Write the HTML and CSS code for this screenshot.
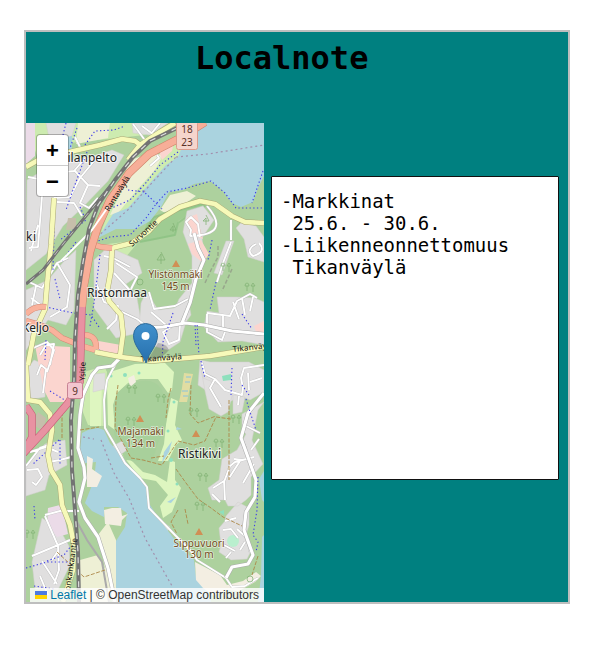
FILE: index.html
```html
<!DOCTYPE html>
<html lang="fi">
<head>
<meta charset="utf-8">
<title>Localnote</title>
<link rel="stylesheet" href="styles.css">
</head>
<body>
<main class="app">
  <h1 class="title">Localnote</h1>
  <div class="content">
    <section class="map">
      <svg class="tiles" viewBox="26 123 238 479" preserveAspectRatio="none">
        <rect x="26" y="123" width="238" height="479" fill="#add19e"/>
        <!-- light grass, scrub and fields -->
        <path class="grass" d="M26 123H160L145 135 70 143 40 165ZM120 180L150 160 190 135 180 160 130 220 100 235ZM100 245L140 240 115 270ZM84 372L104 366 107 372 104 426 88 425 82 410Z"/>
        <path class="field" d="M78 123H110L108 138 76 144ZM128 161L150 153 163 155 155 170 137 190 118 213 110 215 122 190ZM160 210L170 195 187 191 196 196 186 203 165 213ZM98 535L108 522 116 540 116 602H112L100 545ZM80 560L98 555 108 575 110 602H80Z"/>
        <path class="golf" d="M110 372L135 364 165 363 174 372 172 390 168 393 163 386 158 379 140 379 128 383 117 393 113 405 115 430 108 425 107 385ZM171 398L178 401 175 425 182 440 176 445 168 461 158 461 164 444 166 424ZM121 453L133 462 143 472 155 475 167 482 170 460 175 462 175 480 181 488 172 512 163 518 160 506 168 495 156 481 140 478ZM90 375H102L101 426H90Z"/>
        <path class="wood" d="M117 395Q125 382 142 381 155 379 162 390L167 407 166 425 158 443 152 462 125 460 114 434Z"/>
        <path d="M148 220Q165 209 180 210L205 203 201 216 189 214 178 221 175 236 154 240 140 242Z" fill="#9fcc92"/>
        <path d="M140 242L175 235 178 223 189 215 201 216 205 205 M140 239L154 217 180 210 203 204" fill="none" stroke="#83bd7c" stroke-width="2" opacity=".55"/>
        <!-- built-up areas -->
        <g class="urban">
          <path d="M27 180L55 163 88 158 112 150 124 155 108 181 83 207 63 226 46 254 26 270Z"/>
          <path d="M46 123H76L72 136 50 143ZM132 123H168L150 135 133 133Z"/>
          <path d="M26 290L48 280 65 260 76 250 74 310 66 325 48 320 26 350Z"/>
          <path d="M94 260L108 247 120 252 138 260 142 273 126 284 137 298 143 332 116 338 94 308Z"/>
          <path d="M141 303L146 292 152 300 158 310 174 308 188 298 191 315 186 322 180 342 168 350 150 345 139 328Z"/>
          <path d="M187 211L203 206 214 220 202 238 204 253 198 269 193 297 177 304 179 299 192 283 192 256 183 232Z"/>
          <path d="M226 241H234L222 275 214 273ZM244 239L236 228 242 222 256 226 264 237V262L248 257ZM204 327L207 311 219 313 217 297 237 297 255 298 264 302V345L242 341 218 342Z"/>
          <path d="M200 360L210 362H249L264 370V392L250 400 240 396 226 404 210 393 198 385Z"/>
          <path d="M200 363L203 378 213 382 233 392 228 412 221 416 209 409 205 391ZM233 395L245 397 242 412 233 414Z"/>
          <path d="M264 402L258 410 252 440 263 464 251 477 251 495 246 500 238 506 228 506 225 500 212 500 208 488 219 480 222 459 237 450 246 434 242 430 242 414ZM226 516L238 502 249 508 249 525 245 538 252 549 247 559 231 560 219 552 221 545 219 528 225 521Z"/>
          <path d="M26 465L45 444 65 440 67 465 49 475 45 490 26 496ZM42 518L60 530 69 546 70 565 58 590 35 589 32 562ZM26 370L34 360 46 365 45 397 27 400Z"/>
          <path d="M94 374L105 373V389L93 392ZM160 520L170 527 166 533 157 526ZM113 446L122 441 127 450 120 455Z"/>
        </g>
        <g fill="#fbd5cf">
          <path d="M35 345L70 347 70 402 50 402 44 390 40 372ZM93 340L121 345V354H96ZM157 145L174 142 172 151 162 160ZM187 218L197 214 200 228 203 239 190 234ZM188 244L201 240 209 254 203 263 192 254ZM254 326L264 321V335L256 332Z"/>
        </g>
        <path d="M48 508L60 505 64 515 68 534 57 537 47 523ZM26 123H35V156L26 164Z" fill="#ebdbe8"/>
        <path d="M46 418L38 412 32 424 43 431ZM68 218H76V229L66 230Z" fill="#c6beab"/>
        <!-- lakes -->
        <g class="water">
          <path d="M207 123H264V176L258 188 253 202 241 207 232 203 222 190 210 181 194 184 183 190 169 192 161 207 150 221 136 229 116 229 98 238 113 214 128 208 149 184 166 165 178 157 182 147 193 136Z"/>
          <path d="M67 137L72 136V152L68 149Z"/>
          <path d="M82 433L88 430 98 428 104 430 110 443 122 456 130 468 146 486 148 502 162 523 178 544 194 560 196 577 210 592 211 602H116V541L125 527 127 513 118 507 104 507 104 517 92 511 85 503 94 480 96 462 85 463 80 450Z"/>
          <path d="M264 471L259 479 262 500 264 502ZM262 537L264 535V602H258L261 576ZM164 452L172 441 169 452 162 463ZM167 502L176 497 171 503ZM177 427L182 429 176 430Z"/>
        </g>
        <path d="M104 510L112 508 121 508 122 516 128 514 122 520 121 526 105 524ZM87 456L93 459 92 469 102 476 97 487 87 487ZM195 562L220 575 227 585 243 581 256 572 261 576 255 582 239 591 226 590 214 596 203 588 196 580ZM128 378L134 375 136 382 130 387Z" fill="#f3eee2"/>
        <path d="M184 373L193 374 190 387 187 402H179L182 388Z" fill="#e1dda2"/>
        <path d="M186 377H191M185 382H190M182 391H188M183 396H188" stroke="#88c3df"/>
        <g class="aqua"><circle cx="111" cy="376" r="1.500"/><circle cx="125" cy="375" r="2"/><circle cx="139" cy="373" r="1.500"/><circle cx="174" cy="402" r="1.500"/><circle cx="168" cy="431" r="1.500"/><circle cx="171" cy="460" r="2"/><circle cx="177" cy="484" r="1.500"/><path d="M222 376L231 374V380L223 381ZM219 512L224 510 224 515Z"/></g>
        <circle cx="233" cy="541" r="6" fill="#b9efce"/>
        <!-- minor streets -->
        <g class="street-case">
          <path id="streets" d="M28 177L44 180 55 173 74 171 87 156M54 198L70 197 80 178 94 161M75 171L88 185 100 186M88 185L80 203 89 208 98 198M42 196L38 247 29 248M38 225L31 251M57 202L74 203 82 216M75 137L82 151M133 124L147 143M142 126L157 137M160 123L151 134M150 166L159 158 157 155
          M29 282L42 288 57 263 68 258M57 263L70 285 67 307 50 317M36 286L32 305M31 298L42 306M40 355L46 345 54 344 50 365M37 375L41 365 46 369 43 393M104 256L113 258 130 267M116 263L137 277 131 289M114 273L135 296M96 283L104 302 118 306 116 320 107 329M120 311L137 319 146 326
          M149 292L154 309 175 306 188 299M151 312L166 325M180 324L179 340 169 344 163 332 171 327M207 206Q232 235 190 236M190 236L191 230 186 222 191 217 198 224 200 237
          M231 242L223 263 217 282M231 220V240M256 244Q245 250 253 256Q267 252 259 243M207 313L230 316 237 301 250 294 257 298M223 316V327M233 302L239 319M207 314L207 332 222 340 225 332M242 298L245 315M253 297L250 311
          M202 363L205 374 215 379 210 388 221 407M215 379L225 390 242 395 243 388 241 378 244 368 264 365M238 405L239 396M248 373L249 390M250 382L262 378M244 425L260 433M251 450L259 439M246 449L243 442M254 457L235 462 230 466 224 482M242 460L234 459M213 488L224 481 225 500M212 494L220 502M240 461L229 478M254 464L243 483
          M31 349L47 342 54 350 47 372M30 452L46 447 58 452M49 462L60 460 71 457M32 482L36 485 42 477 38 469 27 470M45 515L60 511 79 511M45 516L58 546 59 570 54 584M32 556L70 540M42 561L57 584M52 560L58 551M48 595L40 576M26 466L40 448 49 445
          M223 530L231 529 238 538M237 529L248 539 250 552M224 545L235 551M231 552L226 558M225 521L236 518M245 542L240 550"/>
          <path d="M116 363L107 380 104 400 105 428 115 445 125 463 140 478 147 487 149 508 175 535 190 550 197 560 210 568 226 578 232 587 245 586 258 578"/>
        </g>
        <use href="#streets" class="street"/>
        <path class="street" d="M116 363L107 380 104 400 105 428 115 445 125 463 140 478 147 487 149 508 175 535 190 550 197 560 210 568 226 578 232 587 245 586 258 578"/>
        <g class="major-case"><path id="majors" d="M119 359L112 366 98 368 92 375 83 395 80 415 78 448 84 467 85 478 79 502 85 518 98 537 108 568 115 602M144 328L163 327 185 323 204 325 232 331 264 334M264 393L248 413 241 438 249 460 256 480 255 497 246 512 244 530 253 555 248 564 232 567 226 578M194 233L198 248 204 260 196 279 190 303 182 323"/></g>
        <use href="#majors" class="major"/>
        <path d="M76 520L87 540 102 562 109 602" fill="none" stroke="#aaa" stroke-width="2"/>
        <!-- footpaths -->
        <path class="foot" d="M77 128L69 151 64 178 55 198 53 270M85 145L95 131 114 130 125 126M87 152L73 190 66 210M80 207L86 220 60 240M95 242L110 237 130 235 146 218 156 204 167 192 187 188 211 181 225 193 236 208 248 208 264 208M263 171L252 203M140 188L162 209M178 152L160 165 145 184 130 200 112 208M128 190L145 192M100 255L94 303 90 326M42 306L73 313 91 315 99 327M66 123L62 139M55 279L60 299M62 261L76 242M199 356L197 323M196 345L195 323M216 282L210 310M173 313L163 342 162 362M242 314L252 329M201 361L205 379M232 368L231 395M246 399L250 412 256 430M242 385L249 395M258 477L257 510 253 535 258 542 256 552M50 391L68 402M45 360L46 340M60 440V466M34 506L35 520M26 568L47 562 70 562M47 561L64 555 71 546M34 586L54 589M212 240L208 260M99 350L118 357M59 440L32 465"/>
        <path class="track" d="M118 385L116 400 115 428 131 458 143 460 162 465 178 441 194 445 205 441 216 417 231 419M191 385L190 414 198 423 216 416M229 400V480M151 458L164 456M176 469L186 483 198 499 211 508 223 517 242 526M178 510L171 522 177 534M185 509L188 524M62 438V415M80 430L99 427M57 552L84 577 105 570M258 556L252 575M171 388L168 400 166 418"/>
        <path d="M176 157L208 154 264 145M101 440L114 473 129 498 145 538 172 586M83 437L94 439M97 237L130 208 149 186 176 157" fill="none" stroke="#a28fad" stroke-width="1.2" stroke-dasharray="2 3"/>
        <path d="M218 246V257L211 270 205 283M232 269L222 291" fill="none" stroke="#98a78c" stroke-width="1.500" stroke-dasharray="4 2"/>
        <g class="yellow-case"><path id="yellows" d="M26 167L42 158 65 153 100 145 122 139 135 141 143 147M54 198L51 245 47 285 45 309 34 333 28 365M112 248L132 243 149 231 160 219 180 207 200 201 215 204 232 216 245 222 264 223M175 123L160 132 140 145 128 160M112 248L111 270 107 292 109 301 121 315 123 334 120 356M95 352L121 357 152 361 210 356 264 347M26 365L28 400 40 402 50 414 52 430 48 455 51 470 60 485 62 505 70 525 74 545 73 570 63 602"/></g>
        <use href="#yellows" class="yellow"/>
        <g class="orange-case"><path id="oranges" d="M26 321L40 325 52 330 62 338 82 346 95 350M26 314Q35 305 46 307M95 245L101 247 112 248M84 335Q97 335 96 349"/></g>
        <use href="#oranges" class="orange"/>
        <path class="trunk-case" d="M205 122L178 139 149 154 129 173 110 200 98 226 90 252 84 285 82 307"/>
        <path class="motor-case" d="M82 306L81 345 80 382 68 403 45 430 22 455M26 406L32 415 32 437 25 450"/>
        <path class="motor" d="M82 305L81 345 80 382 68 403 45 430 22 455M26 406L32 415 32 437 25 450"/>
        <path class="trunk" d="M205 122L178 139 149 154 129 173 110 200 98 226 90 252 84 285 82 307"/>
        <path class="street" d="M108 207L92 230 61 261"/>
        <path class="rail thin" d="M111 185L90 211 63 244 43 270 26 284"/>
        <path class="raildash thin" d="M111 185L90 211 63 244 43 270 26 284"/>
        <path class="rail" d="M177 128L150 141 133 157 115 180 98 205 89 229 83 262 78 295 75 340 74 380 71 420 72 470 75 510 78 552 79 602"/>
        <path class="raildash" d="M177 128L150 141 133 157 115 180 98 205 89 229 83 262 78 295 75 340 74 380 71 420 72 470 75 510 78 552 79 602"/>
        <!-- tree marks and summits -->
        <g fill="none" stroke="#82b174" stroke-width=".75">
          <path id="trees" d="M-3 4V-1M-5-1Q-5-4-3-4Q-1-4-1-1ZM3 5V-1M3-4L1-1H5Z"/>
          <path d="M161 264V254L157 260H165L161 252M173 232V226L170 230H176L173 223M206 225V218L203 221H209L206 215"/>
          <use href="#trees" transform="translate(250 287)"/><use href="#trees" transform="translate(161 398)"/><use href="#trees" transform="translate(194 412)"/><use href="#trees" transform="translate(219 443)"/><use href="#trees" transform="translate(236 419)"/><use href="#trees" transform="translate(203 477)"/><use href="#trees" transform="translate(131 421)"/><use href="#trees" transform="translate(200 506)"/><use href="#trees" transform="translate(30 534)"/><use href="#trees" transform="translate(132 389)"/><use href="#trees" transform="translate(226 267)"/>
          <circle cx="140" cy="282" r="3"/><circle cx="250" cy="579" r="3"/>
        </g>
        <path class="peak" d="M176 260L180 267H172ZM140 415L144 422H136ZM196 430L200 437H192ZM199 528L203 535H195Z"/>
        <!-- place names -->
        <g class="place">
          <text x="63" y="162" textLength="54">tilanpelto</text>
          <text x="26" y="241" textLength="10">ki</text>
          <text x="87" y="297" textLength="60">Ristonmaa</text>
          <text x="22" y="332" textLength="27">Keljo</text>
          <text x="178" y="458" textLength="43">Ristikivi</text>
        </g>
        <g class="summit">
          <text x="175.500" y="278" textLength="54">Ylistönmäki</text><text x="175.500" y="290" textLength="28">145 m</text>
          <text x="140.500" y="435" textLength="46">Majamäki</text><text x="140.500" y="447" textLength="29">134 m</text>
          <text x="199" y="547" textLength="51">Sippuvuori</text><text x="199" y="558" textLength="29">130 m</text>
        </g>
        <g class="road-name">
          <text transform="translate(109 212) rotate(-58)" textLength="40">Rantaväylä</text>
          <text transform="translate(132 247) rotate(-42)" textLength="35">Survontie</text>
          <text transform="translate(141 362) rotate(-4)" textLength="41">Tikanväylä</text>
          <text transform="translate(233 352) rotate(-6)" textLength="41">Tikanväylä</text>
          <text transform="translate(85 381) rotate(-88)" textLength="19">Ysitie</text>
          <text transform="translate(70 591) rotate(-82)" textLength="53">onkankaantie</text>
        </g>
        <g class="shield"><rect x="176.500" y="121.500" width="21" height="28" rx="2" fill="#f5d5cc" stroke="#dc9d8d"/><text x="187" y="133">18</text><text x="187" y="145.500">23</text><rect x="67.500" y="382.500" width="15" height="16" rx="2" fill="#f4c6d0" stroke="#c88394"/><text x="75" y="394.500">9</text></g>
        <!-- location marker -->
        <path d="M146 363L158 343Q167 344 169 350Q163 358 146 363Z" fill="#333" opacity=".25"/>
        <path d="M146 363C142 352 133.500 346 133.500 335.500A12 12 0 0 1 157.500 335.500C157.500 346 149 352 146 363Z" fill="url(#pin)" stroke="#2e6c9b"/>
        <circle cx="145.500" cy="336" r="4" fill="#fff"/>
        <defs><linearGradient id="pin" x2="0" y2="1"><stop stop-color="#4191cd"/><stop offset="1" stop-color="#266fac"/></linearGradient></defs>
      </svg>
      <div class="zoom"><span class="zoom-button">+</span><span class="zoom-button">−</span></div>
      <div class="attribution"><svg class="flag" viewBox="0 0 12 8"><path fill="#4c7be1" d="M0 0h12v4H0z"/><path fill="#ffd500" d="M0 4h12v4H0z"/></svg> <span class="link">Leaflet</span> | © OpenStreetMap contributors</div>
    </section>
    <pre class="notes">-Markkinat
 25.6. - 30.6.
-Liikenneonnettomuus
 Tikanväylä</pre>
  </div>
</main>
</body>
</html>
```
FILE: styles.css
```css
* { box-sizing: border-box; }
body { margin: 0; padding: 30px 0 0 24px; background: #fff; }
.app {
  width: 546px; height: 574px; border: 2px solid #bebebe;
  background: #008080; display: flex; flex-direction: column;
}
.title {
  margin: 0; height: 91px; padding: 7px 0 0 169px;
  font: bold 32px/38px "DejaVu Sans Mono", monospace; color: #000;
}
.content { display: flex; align-items: flex-start; gap: 6.5px; }
.map { position: relative; width: 238px; height: 479px; overflow: hidden; }
.tiles { display: block; width: 238px; height: 479px; }
.notes {
  margin: 52.5px 0 0; width: 288px; height: 304px; padding: 13.5px 9.5px;
  border: 1px solid #111; border-radius: 1px; background: #fff; color: #000;
  font: 18.95px/22px "DejaVu Sans Mono", monospace;
}
.zoom {
  position: absolute; left: 10px; top: 11px; width: 33px; height: 63px;
  border: 1.5px solid rgba(0,0,0,.25); border-radius: 4px; background: #fff;
  background-clip: padding-box;
}
.zoom-button {
  display: block; height: 30px; text-align: center; color: #000;
  font: bold 22px/31px "Liberation Sans", sans-serif;
}
.zoom-button + .zoom-button { border-top: 1px solid #ccc; }
.attribution {
  position: absolute; right: 0; bottom: 0; height: 14px; padding: 0 5px;
  background: rgba(255,255,255,.8); color: #333; white-space: nowrap;
  font: 12px/15px "Liberation Sans", sans-serif;
}
.flag { width: 12px; height: 8px; }
.link { color: #0078a8; }

.grass { fill: #cdebb0; }
.field { fill: #eef0d5; }
.golf { fill: #def6c0; }
.wood { fill: #a8d09b; }
.urban { fill: #e0dfdf; stroke: #d0cecd; stroke-width: .5; }
.water { fill: #aad3df; }
.aqua { fill: #8ee0bd; }
.street, .street-case, .major, .major-case, .foot, .track, .yellow, .yellow-case,
.orange, .orange-case, .trunk, .trunk-case, .motor, .motor-case, .rail, .raildash {
  fill: none; stroke-linejoin: round;
}
.street-case { stroke: #bbb; stroke-width: 2.6; }
.street { stroke: #fff; stroke-width: 1.9; }
.major-case { stroke: #aaa; stroke-width: 4.2; }
.major { stroke: #fff; stroke-width: 3.2; }
.foot { stroke: #3c3ce8; stroke-width: 1.1; stroke-dasharray: 1.3 2.4; }
.track { stroke: #ad8848; stroke-width: .9; stroke-dasharray: 4 1.5; }
.yellow-case { stroke: #aaa875; stroke-width: 5.6; }
.yellow { stroke: #f6f9b9; stroke-width: 4.6; }
.orange-case { stroke: #d48875; stroke-width: 6; }
.orange { stroke: #f9b29c; stroke-width: 5; }
.trunk-case { stroke: #cf8067; stroke-width: 8; }
.trunk { stroke: #f7ae98; stroke-width: 7; }
.motor-case { stroke: #c95e78; stroke-width: 7.5; }
.motor { stroke: #e892a2; stroke-width: 6.3; }
.rail { stroke: #737373; stroke-width: 4; }
.raildash { stroke: #ddd; stroke-width: 1.2; stroke-dasharray: 6 6; }
.rail.thin { stroke-width: 3; }
.raildash.thin { stroke-width: .7; }
.peak { fill: #d08f55; }
.place, .summit, .road-name, .shield { font-family: "Noto Sans", sans-serif; }
.place { font-size: 12px; fill: #222; stroke: rgba(255,255,255,.65); stroke-width: 2px; paint-order: stroke; }
.summit { font-size: 10px; fill: #734a20; text-anchor: middle; stroke: rgba(255,255,255,.6); stroke-width: 1.5px; paint-order: stroke; }
.road-name { font-size: 8px; fill: #111; }
.shield { font-size: 10px; text-anchor: middle; }
.shield text { fill: #5a3027; }
```
